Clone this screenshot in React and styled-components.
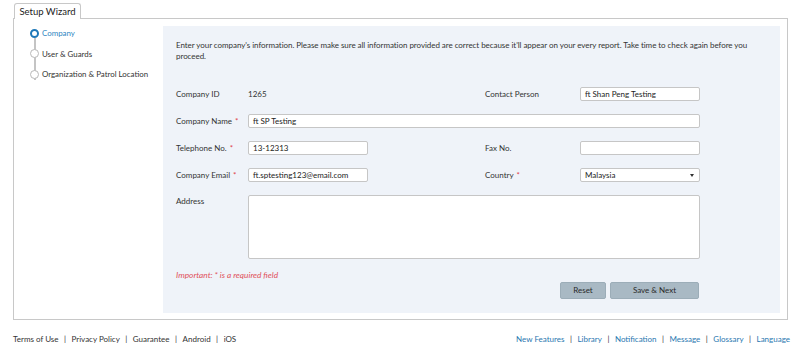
import React from 'react';
import styled, { createGlobalStyle } from 'styled-components';

const GlobalStyle = createGlobalStyle`
  body {
    margin: 0;
    background: #ffffff;
    font-family: "Lato", "Open Sans", sans-serif;
    color: #333;
  }
  * { box-sizing: border-box; }
`;

const Page = styled.div`
  width: 800px;
  height: 348px;
  padding: 3px 12px 0 13px;
  display: flex;
  flex-direction: column;
`;

const TabBar = styled.div`
  display: flex;
  height: 15px;
  position: relative;
  z-index: 1;
`;

const Tab = styled.div`
  margin-left: 1px;
  width: 67px;
  height: 16px;
  border: 1px solid #c8c8c8;
  border-bottom: none;
  border-radius: 3px 3px 0 0;
  background: #fff;
  font-size: 9.5px;
  line-height: 15px;
  text-align: center;
  color: #222;
`;

const Box = styled.div`
  height: 302px;
  border: 1px solid #c8c8c8;
  display: flex;
  padding: 7px 7px 6px 0;
`;

const Steps = styled.ul`
  list-style: none;
  margin: 0;
  padding: 2px 0 0 16px;
  width: 149px;
  flex-shrink: 0;
  position: relative;
`;

const StepLine = styled.div`
  position: absolute;
  left: 20px;
  top: 12px;
  width: 2px;
  height: 42px;
  background: #c4c4c4;
`;

const Step = styled.li`
  display: flex;
  align-items: center;
  gap: 3px;
  height: 10px;
  margin-bottom: 10.5px;
  font-size: 7.9px;
  color: ${p => (p.$active ? '#2f86c2' : '#333')};
  position: relative;
`;

const Dot = styled.span`
  width: 9px;
  height: 9px;
  border-radius: 50%;
  background: #fff;
  border: ${p => (p.$active ? '2px solid #1f78b8' : '1.5px solid #b8b8b8')};
  flex-shrink: 0;
`;

const Panel = styled.div`
  flex: 1;
  background: #eff3f9;
  padding: 14px 13px 14px 13px;
  display: flex;
  flex-direction: column;
`;

const Intro = styled.p`
  margin: 0 0 25px;
  font-size: 8px;
  letter-spacing: -0.05px;
  line-height: 11px;
  color: #333;
`;

const Form = styled.div`
  display: grid;
  grid-template-columns: 72px 120px 117px 95px 120px;
  row-gap: 13px;
  align-items: center;
`;

const Label = styled.div`
  font-size: 8px;
  color: #333;
  grid-column: ${p => p.$col || 'auto'};
  align-self: ${p => (p.$top ? 'start' : 'center')};
  padding-top: ${p => (p.$top ? '1px' : '0')};
`;

const Req = styled.span`
  color: #e0404a;
  margin-left: 3px;
`;

const Value = styled.div`
  font-size: 8px;
  height: 14px;
  line-height: 14px;
`;

const Input = styled.div`
  height: 14px;
  border: 1px solid #c6c6c6;
  border-radius: 2px;
  background: #fff;
  font-size: 8px;
  line-height: 12px;
  padding: 0 4px;
  color: #222;
  grid-column: ${p => p.$span || 'auto'};
  position: relative;
`;

const Caret = styled.span`
  position: absolute;
  right: 5px;
  top: 5px;
  width: 0;
  height: 0;
  border-left: 2.5px solid transparent;
  border-right: 2.5px solid transparent;
  border-top: 3px solid #333;
`;

const TextArea = styled.div`
  grid-column: 2 / 6;
  height: 64px;
  border: 1px solid #c6c6c6;
  border-radius: 2px;
  background: #fff;
`;

const Note = styled.div`
  margin-top: 11px;
  font-size: 8.3px;
  font-style: italic;
  color: #e0505a;
`;

const Actions = styled.div`
  display: flex;
  justify-content: flex-end;
  gap: 4px;
  width: 523px;
  margin-top: 2px;
`;

const Button = styled.div`
  height: 17px;
  width: ${p => p.$w}px;
  background: #a9b9c4;
  border: 1px solid #9cadb8;
  border-radius: 2px;
  font-size: 8px;
  line-height: 15px;
  text-align: center;
  color: #2a2a2a;
`;

const Footer = styled.div`
  display: flex;
  justify-content: space-between;
  margin-top: 14px;
  margin-right: -2px;
  font-size: 8px;
`;

const Links = styled.div`
  display: flex;
  gap: 5.5px;
  color: ${p => (p.$blue ? '#2a77b0' : '#333')};
`;

const Sep = styled.span`
  color: #333;
`;

const LinkList = ({ items, blue }) => (
  <Links $blue={blue}>
    {items.map((t, i) => (
      <React.Fragment key={t}>
        {i > 0 && <Sep>|</Sep>}
        <span>{t}</span>
      </React.Fragment>
    ))}
  </Links>
);

export default function App() {
  return (
    <Page>
      <GlobalStyle />
      <TabBar>
        <Tab>Setup Wizard</Tab>
      </TabBar>
      <Box>
        <Steps>
          <StepLine />
          <Step $active><Dot $active />Company</Step>
          <Step><Dot />User &amp; Guards</Step>
          <Step><Dot />Organization &amp; Patrol Location</Step>
        </Steps>
        <Panel>
          <Intro>
            Enter your company's information. Please make sure all information provided are correct because it'll appear on your every report. Take time to check again before you proceed.
          </Intro>
          <Form>
            <Label>Company ID</Label>
            <Value>1265</Value>
            <Label $col="4">Contact Person</Label>
            <Input>ft Shan Peng Testing</Input>

            <Label>Company Name<Req>*</Req></Label>
            <Input $span="2 / 6">ft SP Testing</Input>

            <Label>Telephone No.<Req>*</Req></Label>
            <Input>13-12313</Input>
            <Label $col="4">Fax No.</Label>
            <Input />

            <Label>Company Email<Req>*</Req></Label>
            <Input>ft.sptesting123@email.com</Input>
            <Label $col="4">Country<Req>*</Req></Label>
            <Input>Malaysia<Caret /></Input>

            <Label $top>Address</Label>
            <TextArea />
          </Form>
          <Note>Important: * is a required field</Note>
          <Actions>
            <Button $w={46}>Reset</Button>
            <Button $w={89}>Save &amp; Next</Button>
          </Actions>
        </Panel>
      </Box>
      <Footer>
        <LinkList items={['Terms of Use', 'Privacy Policy', 'Guarantee', 'Android', 'iOS']} />
        <LinkList blue items={['New Features', 'Library', 'Notification', 'Message', 'Glossary', 'Language']} />
      </Footer>
    </Page>
  );
}
